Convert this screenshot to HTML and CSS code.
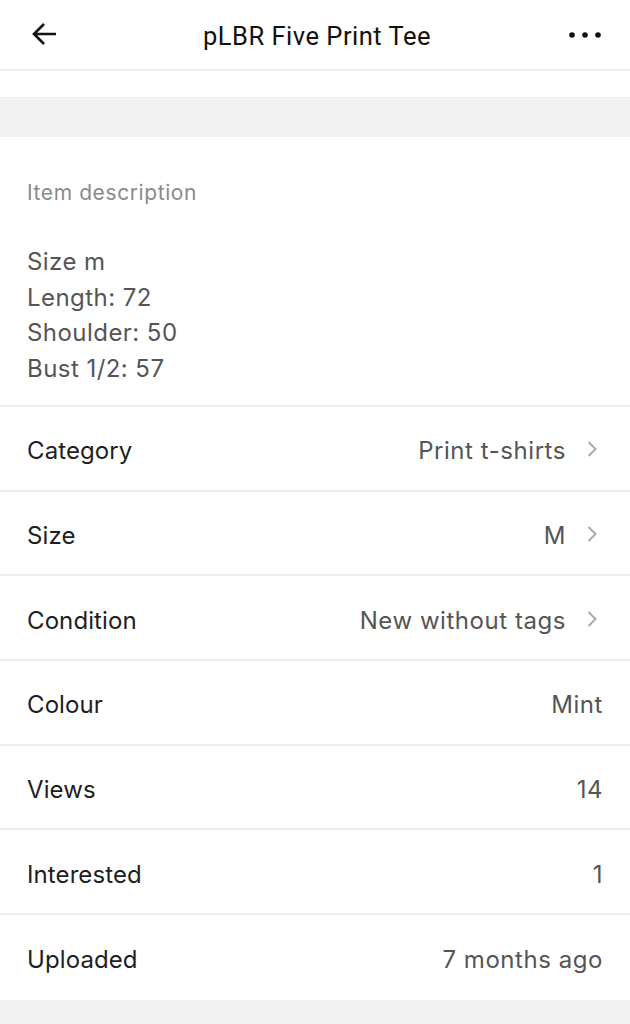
FILE: index.html
```html
<!DOCTYPE html>
<html>
<head>
<meta charset="utf-8">
<link rel="stylesheet" href="styles.css">
</head>
<body>
<header class="topbar">
  <span class="icon-btn back">
    <svg width="26" height="24" viewBox="0 0 26 24"><path d="M24 12H3M12 2L2 12l10 10" fill="none" stroke="#111" stroke-width="2.6"/></svg>
  </span>
  <h1 class="title">pLBR Five Print Tee</h1>
  <span class="icon-btn more">
    <svg width="34" height="8" viewBox="0 0 34 8"><circle cx="4" cy="4" r="2.8" fill="#111"/><circle cx="17" cy="4" r="2.8" fill="#111"/><circle cx="30" cy="4" r="2.8" fill="#111"/></svg>
  </span>
</header>
<div class="spacer"></div>
<div class="band"></div>
<section class="desc">
  <div class="desc-label">Item description</div>
  <div class="desc-body">
    <div>Size m</div>
    <div>Length: 72</div>
    <div>Shoulder: 50</div>
    <div>Bust 1/2: 57</div>
  </div>
</section>
<ul class="rows">
  <li class="row"><span class="label">Category</span><span class="value">Print t-shirts<svg class="chev" width="12" height="20" viewBox="0 0 12 20"><path d="M2.5 3l7 7-7 7" fill="none" stroke="#aaa" stroke-width="2"/></svg></span></li>
  <li class="row"><span class="label">Size</span><span class="value">M<svg class="chev" width="12" height="20" viewBox="0 0 12 20"><path d="M2.5 3l7 7-7 7" fill="none" stroke="#aaa" stroke-width="2"/></svg></span></li>
  <li class="row"><span class="label">Condition</span><span class="value">New without tags<svg class="chev" width="12" height="20" viewBox="0 0 12 20"><path d="M2.5 3l7 7-7 7" fill="none" stroke="#aaa" stroke-width="2"/></svg></span></li>
  <li class="row"><span class="label">Colour</span><span class="value">Mint</span></li>
  <li class="row"><span class="label">Views</span><span class="value">14</span></li>
  <li class="row"><span class="label">Interested</span><span class="value">1</span></li>
  <li class="row"><span class="label">Uploaded</span><span class="value">7 months ago</span></li>
</ul>
<div class="footer-band"></div>
</body>
</html>
```
FILE: styles.css
```css
* { box-sizing: border-box; }
html, body { margin: 0; padding: 0; background: #fff; }
body { font-family: Inter, "Noto Sans", sans-serif; color: #222; width: 630px; }
.topbar {
  height: 71px;
  display: flex;
  align-items: center;
  justify-content: space-between;
  padding: 0 28px 0 32px;
  border-bottom: 2px solid #ececec;
}
.icon-btn { display: flex; align-items: center; width: 40px; }
.icon-btn.back { margin-top: -2px; }
.icon-btn.more { justify-content: flex-end; }
.title {
  margin: 0;
  font-family: Roboto, "Liberation Sans", sans-serif;
  font-weight: 400;
  font-size: 25.5px;
  letter-spacing: 0.5px;
  color: #111;
  margin-top: 2px;
}
.spacer { height: 26px; }
.band { height: 40px; background: #f1f1f1; }
.desc {
  padding: 42px 27px 20px;
  border-bottom: 2px solid #ececec;
  height: 270px;
}
.desc-label { font-size: 21px; letter-spacing: 0.6px; color: #8a8a8a; line-height: 28px; }
.desc-body { margin-top: 37px; font-size: 24px; letter-spacing: 0.45px; color: #555; line-height: 35.6px; }
.rows { list-style: none; margin: 0; padding: 0; }
.row {
  height: 84.7px;
  display: flex;
  align-items: center;
  justify-content: space-between;
  padding: 5px 27px 0;
  border-bottom: 2px solid #ececec;
  font-size: 24px;
}
.row:last-child { border-bottom: none; }
.label { color: #1e1e1e; letter-spacing: 0.1px; }
.value { color: #555; display: flex; align-items: center; letter-spacing: 0.55px; }
.chev { margin-left: 20px; margin-right: 5px; margin-top: -3px; }
.footer-band { height: 40px; background: #f1f1f1; }
```
